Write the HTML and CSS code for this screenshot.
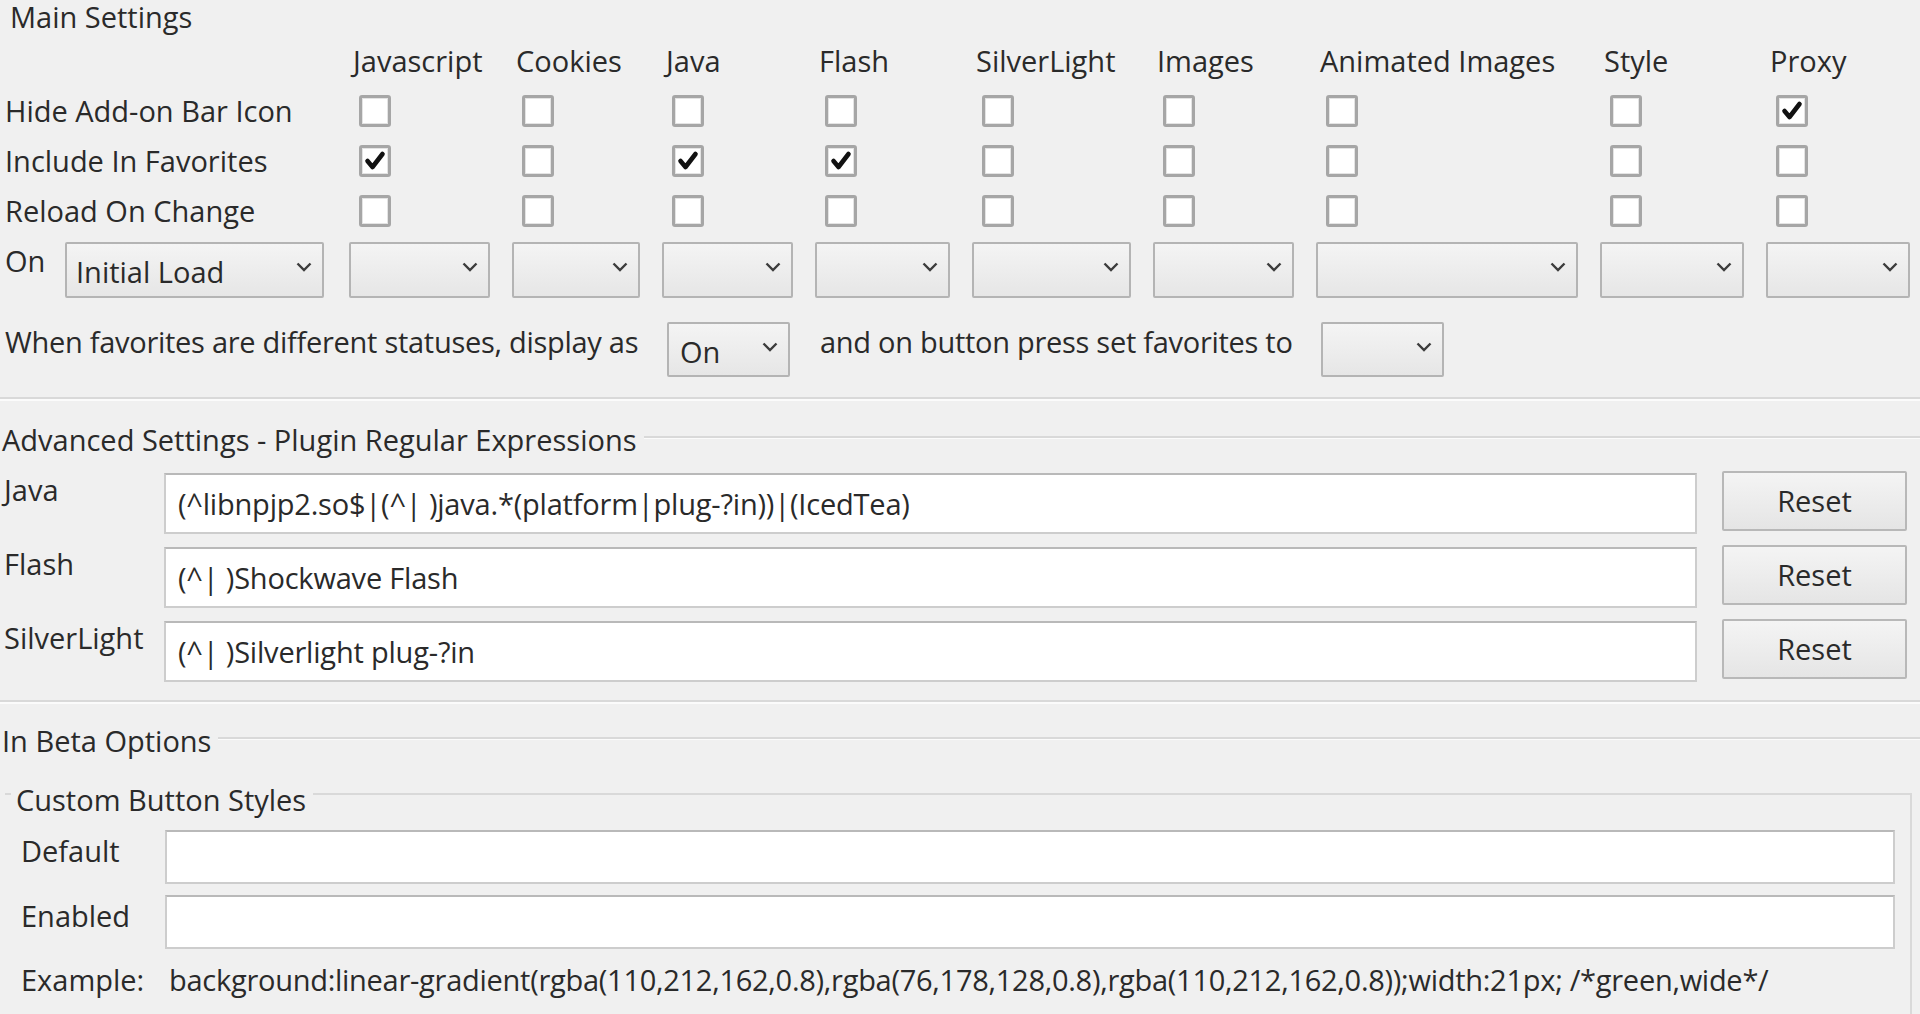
FILE: index.html
```html
<!DOCTYPE html>
<html lang="en">
<head>
<meta charset="utf-8">
<title>Settings</title>
<link rel="stylesheet" href="styles.css">
</head>
<body>
<div class="page">
  <section class="main">
    <div class="main-legend">Main Settings</div>
    <div class="matrix">
      <div class="corner"></div>
      <div class="head">Javascript</div>
      <div class="head">Cookies</div>
      <div class="head">Java</div>
      <div class="head">Flash</div>
      <div class="head">SilverLight</div>
      <div class="head">Images</div>
      <div class="head">Animated Images</div>
      <div class="head">Style</div>
      <div class="head">Proxy</div>

      <div class="rowlabel">Hide Add-on Bar Icon</div>
      <div class="cbcell"><span class="cb" role="checkbox" aria-checked="false"></span></div>
      <div class="cbcell"><span class="cb" role="checkbox" aria-checked="false"></span></div>
      <div class="cbcell"><span class="cb" role="checkbox" aria-checked="false"></span></div>
      <div class="cbcell"><span class="cb" role="checkbox" aria-checked="false"></span></div>
      <div class="cbcell"><span class="cb" role="checkbox" aria-checked="false"></span></div>
      <div class="cbcell"><span class="cb" role="checkbox" aria-checked="false"></span></div>
      <div class="cbcell"><span class="cb" role="checkbox" aria-checked="false"></span></div>
      <div class="cbcell"><span class="cb" role="checkbox" aria-checked="false"></span></div>
      <div class="cbcell"><span class="cb" role="checkbox" aria-checked="true"><svg viewBox="0 0 26 26"><path d="M5.5 13 L10.5 19 L20.5 6"/></svg></span></div>

      <div class="rowlabel">Include In Favorites</div>
      <div class="cbcell"><span class="cb" role="checkbox" aria-checked="true"><svg viewBox="0 0 26 26"><path d="M5.5 13 L10.5 19 L20.5 6"/></svg></span></div>
      <div class="cbcell"><span class="cb" role="checkbox" aria-checked="false"></span></div>
      <div class="cbcell"><span class="cb" role="checkbox" aria-checked="true"><svg viewBox="0 0 26 26"><path d="M5.5 13 L10.5 19 L20.5 6"/></svg></span></div>
      <div class="cbcell"><span class="cb" role="checkbox" aria-checked="true"><svg viewBox="0 0 26 26"><path d="M5.5 13 L10.5 19 L20.5 6"/></svg></span></div>
      <div class="cbcell"><span class="cb" role="checkbox" aria-checked="false"></span></div>
      <div class="cbcell"><span class="cb" role="checkbox" aria-checked="false"></span></div>
      <div class="cbcell"><span class="cb" role="checkbox" aria-checked="false"></span></div>
      <div class="cbcell"><span class="cb" role="checkbox" aria-checked="false"></span></div>
      <div class="cbcell"><span class="cb" role="checkbox" aria-checked="false"></span></div>

      <div class="rowlabel">Reload On Change</div>
      <div class="cbcell"><span class="cb" role="checkbox" aria-checked="false"></span></div>
      <div class="cbcell"><span class="cb" role="checkbox" aria-checked="false"></span></div>
      <div class="cbcell"><span class="cb" role="checkbox" aria-checked="false"></span></div>
      <div class="cbcell"><span class="cb" role="checkbox" aria-checked="false"></span></div>
      <div class="cbcell"><span class="cb" role="checkbox" aria-checked="false"></span></div>
      <div class="cbcell"><span class="cb" role="checkbox" aria-checked="false"></span></div>
      <div class="cbcell"><span class="cb" role="checkbox" aria-checked="false"></span></div>
      <div class="cbcell"><span class="cb" role="checkbox" aria-checked="false"></span></div>
      <div class="cbcell"><span class="cb" role="checkbox" aria-checked="false"></span></div>

      <div class="onlabel">
        <span class="on-text">On</span>
        <div class="select sel-initial" role="combobox"><span class="val">Initial Load</span><svg class="chev" viewBox="0 0 16 10"><path d="M1.5 1.5 L8 8 L14.5 1.5"/></svg></div>
      </div>
      <div class="selcell"><div class="select" role="combobox"><span class="val"></span><svg class="chev" viewBox="0 0 16 10"><path d="M1.5 1.5 L8 8 L14.5 1.5"/></svg></div></div>
      <div class="selcell"><div class="select" role="combobox"><span class="val"></span><svg class="chev" viewBox="0 0 16 10"><path d="M1.5 1.5 L8 8 L14.5 1.5"/></svg></div></div>
      <div class="selcell"><div class="select" role="combobox"><span class="val"></span><svg class="chev" viewBox="0 0 16 10"><path d="M1.5 1.5 L8 8 L14.5 1.5"/></svg></div></div>
      <div class="selcell"><div class="select" role="combobox"><span class="val"></span><svg class="chev" viewBox="0 0 16 10"><path d="M1.5 1.5 L8 8 L14.5 1.5"/></svg></div></div>
      <div class="selcell"><div class="select" role="combobox"><span class="val"></span><svg class="chev" viewBox="0 0 16 10"><path d="M1.5 1.5 L8 8 L14.5 1.5"/></svg></div></div>
      <div class="selcell"><div class="select" role="combobox"><span class="val"></span><svg class="chev" viewBox="0 0 16 10"><path d="M1.5 1.5 L8 8 L14.5 1.5"/></svg></div></div>
      <div class="selcell"><div class="select" role="combobox"><span class="val"></span><svg class="chev" viewBox="0 0 16 10"><path d="M1.5 1.5 L8 8 L14.5 1.5"/></svg></div></div>
      <div class="selcell"><div class="select" role="combobox"><span class="val"></span><svg class="chev" viewBox="0 0 16 10"><path d="M1.5 1.5 L8 8 L14.5 1.5"/></svg></div></div>
      <div class="selcell"><div class="select" role="combobox"><span class="val"></span><svg class="chev" viewBox="0 0 16 10"><path d="M1.5 1.5 L8 8 L14.5 1.5"/></svg></div></div>
    </div>

    <div class="fav">
      <span class="fav-text">When favorites are different statuses, display as</span>
      <div class="select sel-fav" role="combobox"><span class="val">On</span><svg class="chev" viewBox="0 0 16 10"><path d="M1.5 1.5 L8 8 L14.5 1.5"/></svg></div>
      <span class="fav-text">and on button press set favorites to</span>
      <div class="select sel-fav" role="combobox"><span class="val"></span><svg class="chev" viewBox="0 0 16 10"><path d="M1.5 1.5 L8 8 L14.5 1.5"/></svg></div>
    </div>
  </section>

  <section class="fs adv">
    <div class="legend">Advanced Settings - Plugin Regular Expressions</div>
    <div class="regex">
      <label class="rlabel">Java</label>
      <input class="field" type="text" value="(^libnpjp2.so$|(^| )java.*(platform|plug-?in))|(IcedTea)">
      <button class="reset" type="button">Reset</button>

      <label class="rlabel">Flash</label>
      <input class="field" type="text" value="(^| )Shockwave Flash">
      <button class="reset" type="button">Reset</button>

      <label class="rlabel">SilverLight</label>
      <input class="field" type="text" value="(^| )Silverlight plug-?in">
      <button class="reset" type="button">Reset</button>
    </div>
  </section>

  <section class="fs beta">
    <div class="legend">In Beta Options</div>
    <div class="subgroup">
      <div class="sublegend">Custom Button Styles</div>
      <div class="styles">
        <label class="slabel">Default</label>
        <input class="field sfield" type="text" value="">
        <label class="slabel">Enabled</label>
        <input class="field sfield" type="text" value="">
        <span class="example-label">Example:</span>
        <span class="example-value">background:linear-gradient(rgba(110,212,162,0.8),rgba(76,178,128,0.8),rgba(110,212,162,0.8));width:21px; /*green,wide*/</span>
      </div>
    </div>
  </section>
</div>
</body>
</html>
```

FILE: styles.css
```css
* { box-sizing: border-box; }

html, body {
  margin: 0;
  padding: 0;
}

body {
  width: 1920px;
  height: 1014px;
  overflow: hidden;
  background: #f0f0f0;
  color: #2a2a2a;
  font-family: "Open Sans", "Noto Sans", sans-serif;
  font-size: 29px;
  font-weight: 500;
  line-height: 34px;
}

/* ---------- Main settings ---------- */
.main {
  padding: 0 0 20px 5px;
  border-bottom: 2px solid #d9d9d9;
  box-shadow: 0 2px 0 #fbfbfb;
}

.main-legend {
  height: 36px;
  padding-left: 5px;
  line-height: 34px;
}

.matrix {
  display: grid;
  grid-template-columns: 322px 141px 128px 131px 135px 159px 141px 262px 144px 144px;
  grid-template-rows: 50px 50px 49px 51px 62px;
  column-gap: 22px;
}

.head {
  align-self: center;
  padding-left: 4px;
  white-space: nowrap;
}

.rowlabel {
  align-self: center;
  white-space: nowrap;
}

.cbcell {
  display: flex;
  align-items: center;
  padding-left: 10px;
}

.cb {
  width: 32px;
  height: 32px;
  border: 3px solid #a6a6a6;
  border-radius: 3px;
  background: #ffffff;
  box-shadow: inset 0 0 0 1px #e4e4e4;
  display: flex;
}

.cb svg {
  width: 26px;
  height: 26px;
}

.cb path {
  fill: none;
  stroke: #111111;
  stroke-width: 4.6;
  stroke-linecap: round;
  stroke-linejoin: round;
}

.onlabel {
  display: flex;
  align-items: flex-start;
  align-self: end;
}

.on-text {
  padding-top: 2px;
  width: 60px;
}

.selcell {
  align-self: end;
}

.select {
  height: 56px;
  border: 2px solid #b4b4b4;
  border-radius: 2px;
  background: linear-gradient(#f4f4f4, #e6e6e6);
  display: flex;
  align-items: center;
  justify-content: space-between;
  padding: 0 10px 0 9px;
}

.select .val {
  padding-top: 4px;
  white-space: nowrap;
}

.sel-initial {
  width: 259px;
}

.chev {
  width: 16px;
  height: 10px;
  margin-bottom: 6px;
  flex: none;
}

.chev path {
  fill: none;
  stroke: #3c3c3c;
  stroke-width: 2.4;
}

.fav {
  display: grid;
  grid-template-columns: 632px 123px 471px 123px;
  column-gap: 30px;
  align-items: start;
  margin-top: 24px;
}

.fav-text {
  padding-top: 3px;
  white-space: nowrap;
  letter-spacing: -0.28px;
}

.sel-fav {
  height: 55px;
  padding-left: 11px;
}

/* ---------- Fieldset-like groups ---------- */
.fs {
  border-top: 2px solid #d9d9d9;
  border-bottom: 2px solid #d9d9d9;
  box-shadow: 0 2px 0 #fbfbfb, inset 0 1px 0 #fbfbfb;
}

.legend {
  width: fit-content;
  margin-top: -15px;
  padding: 0 7px 0 2px;
  background: #f0f0f0;
  line-height: 34px;
  white-space: nowrap;
}

.adv {
  margin-top: 37px;
  padding: 0 13px 18px 0;
}

.regex {
  display: grid;
  grid-template-columns: 160px 1fr 210px;
  grid-auto-rows: 61px;
  row-gap: 13px;
  margin: 16px 0 0 4px;
}

.rlabel {
  padding-top: 0;
}

.field {
  font: inherit;
  color: #2a2a2a;
  letter-spacing: -0.2px;
  height: 100%;
  width: 100%;
  margin: 0;
  padding: 0 12px;
  background: #ffffff;
  border: 2px solid #cdcdcd;
  border-top-color: #b9b9b9;
  border-radius: 0;
  outline: none;
}

.reset {
  font: inherit;
  color: #2a2a2a;
  justify-self: end;
  width: 185px;
  height: 60px;
  margin: -2px 0 0 0;
  padding: 0;
  border: 2px solid #b8b8b8;
  border-radius: 2px;
  background: linear-gradient(#f4f4f4, #e5e5e5);
}

.beta {
  margin-top: 35px;
  padding: 0 8px 0 0;
  border-bottom: none;
}

.subgroup {
  margin: 35px 0 0 5px;
  padding: 0 15px 0 16px;
  border-top: 2px solid #d9d9d9;
  border-right: 2px solid #d9d9d9;
  height: 260px;
}

.sublegend {
  width: fit-content;
  margin: -12px 0 0 -10px;
  padding: 0 7px 0 5px;
  background: #f0f0f0;
  line-height: 34px;
  white-space: nowrap;
}

.styles {
  display: grid;
  grid-template-columns: 144px 1fr;
  grid-template-rows: 54px 54px auto;
  row-gap: 11px;
  margin-top: 13px;
}

.slabel {
  padding-top: 4px;
}

.example-label {
  margin-top: 3px;
  white-space: nowrap;
}

.example-value {
  margin-top: 3px;
  padding-left: 4px;
  white-space: nowrap;
  letter-spacing: -0.27px;
}
```
